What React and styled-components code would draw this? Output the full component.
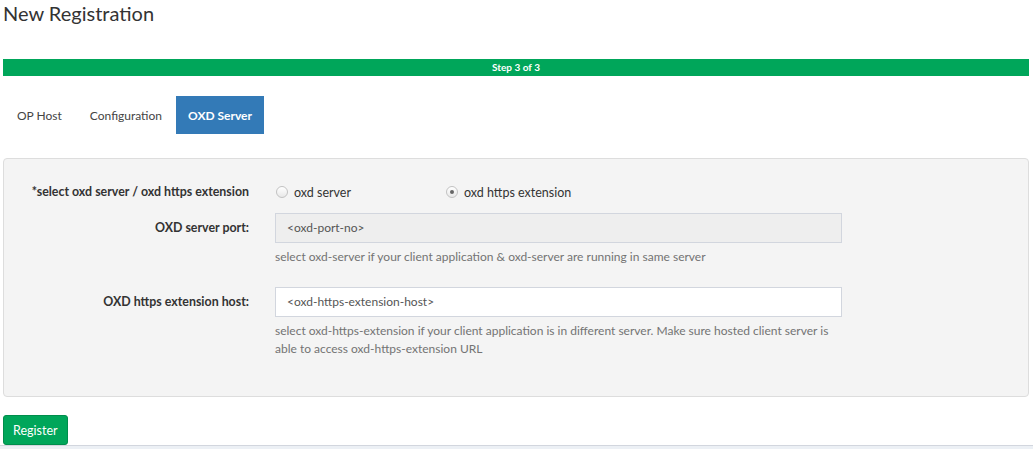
import React from "react";
import styled, { createGlobalStyle } from "styled-components";

const Global = createGlobalStyle`
  html, body { margin: 0; padding: 0; background: #ecf0f5; }
  body { font-family: Lato, "Open Sans", sans-serif; color: #333; }
  * { box-sizing: border-box; }
`;

const Page = styled.div`
  background: #fff;
  height: 446px;
  border-bottom: 1px solid #d2d6de;
  padding: 0 4px 0 3px;
  display: flex;
  flex-direction: column;
`;

const Title = styled.h1`
  margin: 0;
  padding-top: 1px;
  font-size: 20px;
  font-weight: 400;
  line-height: 24px;
  color: #333;
`;

const Progress = styled.div`
  margin-top: 34px;
  height: 17px;
  background: #00a65a;
  color: #fff;
  font-size: 10px;
  font-weight: 700;
  line-height: 17px;
  text-align: center;
`;

const Tabs = styled.div`
  display: flex;
  margin-top: 20px;
  height: 38px;
`;

const Tab = styled.div`
  padding: 2px ${(p) => (p.$active ? "12px" : "14px")} 0;
  font-size: 12px;
  line-height: 36px;
  color: ${(p) => (p.$active ? "#fff" : "#444")};
  background: ${(p) => (p.$active ? "#337ab7" : "transparent")};
  font-weight: ${(p) => (p.$active ? 700 : 400)};
`;

const Panel = styled.div`
  margin-top: 24px;
  background: #f4f4f4;
  border: 1px solid #ddd;
  border-radius: 4px;
  padding: 25px 0 38px;
  display: grid;
  grid-template-columns: 245px 567px;
  column-gap: 26px;
`;

const Label = styled.div`
  text-align: right;
  font-size: 12.4px;
  font-weight: 700;
  color: #333;
  line-height: 16px;
  padding-top: ${(p) => p.$pt || "0"};
`;

const Field = styled.div`
  display: flex;
  flex-direction: column;
  padding-bottom: ${(p) => p.$pb || "0"};
`;

const RadioRow = styled.div`
  display: flex;
  height: 16px;
  align-items: center;
  margin-bottom: 13px;
`;

const RadioItem = styled.label`
  display: flex;
  align-items: center;
  width: 170px;
  font-size: 12.5px;
  color: #333;
`;

const Radio = styled.span`
  width: 12px;
  height: 12px;
  border-radius: 50%;
  border: 1px solid #c2c2c2;
  background: linear-gradient(#fff, #e8e8e8);
  margin: 0 6px 0 1px;
  position: relative;
  &::after {
    content: "";
    display: ${(p) => (p.$checked ? "block" : "none")};
    position: absolute;
    left: 3px;
    top: 3px;
    width: 4px;
    height: 4px;
    border-radius: 50%;
    background: #666;
  }
`;

const Input = styled.div`
  height: 30px;
  border: 1px solid #d2d6de;
  background: ${(p) => (p.$disabled ? "#eee" : "#fff")};
  padding: 0 11px;
  font-size: 12px;
  line-height: 28px;
  color: #555;
`;

const Help = styled.div`
  margin-top: 5px;
  font-size: 12px;
  line-height: 18px;
  color: #737373;
`;

const Footer = styled.div`
  margin-top: 18px;
`;

const Button = styled.button`
  font-family: inherit;
  height: 30px;
  padding: 0 9px;
  background: #00a65a;
  border: 1px solid #008d4c;
  border-radius: 3px;
  color: #fff;
  font-size: 12.5px;
`;

export default function App() {
  return (
    <>
      <Global />
      <Page>
        <Title>New Registration</Title>
        <Progress>Step 3 of 3</Progress>
        <Tabs>
          <Tab>OP Host</Tab>
          <Tab>Configuration</Tab>
          <Tab $active>OXD Server</Tab>
        </Tabs>
        <Panel>
          <Label>*select oxd server / oxd https extension</Label>
          <RadioRow>
            <RadioItem>
              <Radio />
              oxd server
            </RadioItem>
            <RadioItem>
              <Radio $checked />
              oxd https extension
            </RadioItem>
          </RadioRow>
          <Label $pt="7px">OXD server port:</Label>
          <Field $pb="21px">
            <Input $disabled>&lt;oxd-port-no&gt;</Input>
            <Help>select oxd-server if your client application &amp; oxd-server are running in same server</Help>
          </Field>
          <Label $pt="7px">OXD https extension host:</Label>
          <Field>
            <Input>&lt;oxd-https-extension-host&gt;</Input>
            <Help>
              select oxd-https-extension if your client application is in different server. Make sure hosted client server is
              able to access oxd-https-extension URL
            </Help>
          </Field>
        </Panel>
        <Footer>
          <Button>Register</Button>
        </Footer>
      </Page>
    </>
  );
}
